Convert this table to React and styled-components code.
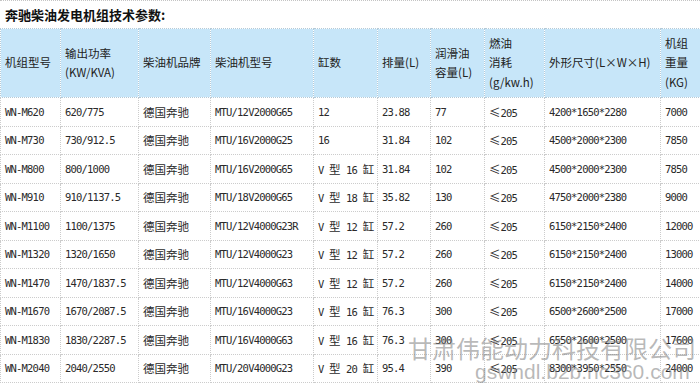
import React from 'react';
import styled, { createGlobalStyle } from 'styled-components';

const Global = createGlobalStyle`
  html, body { margin: 0; padding: 0; background: #fff; }
  body { font-family: "Noto Sans CJK SC", sans-serif; }
`;

const Page = styled.div`
  position: relative;
  width: 700px;
  height: 384px;
  overflow: hidden;
  background: #fff;
`;

const Title = styled.h2`
  margin: 0;
  height: 28px;
  box-sizing: border-box;
  border-top: 1px dotted #c4c4c4;
  padding-left: 5px;
  display: flex;
  align-items: center;
  font: bold 13px/1 "Noto Sans CJK SC", sans-serif;
  color: #111;
`;

const Table = styled.table`
  width: 700px;
  table-layout: fixed;
  border-collapse: collapse;
`;

const HeadRow = styled.tr`
  height: 69px;
`;

const BodyRow = styled.tr`
  height: 28.5px;
`;

const HeadCell = styled.th`
  background: #c7e6f9;
  border: 1px dotted #b4cad8;
  text-align: left;
  padding: 0 0 0 4px;
  font: normal 11.5px/19.5px "Noto Sans CJK SC", sans-serif;
  color: #222;
  vertical-align: middle;
  white-space: nowrap;
  overflow: hidden;
`;

const Cell = styled.td`
  border: 1px dotted #cccccc;
  padding: 0 0 0 4px;
  font-family: "DejaVu Sans Mono", "Noto Sans CJK SC", monospace;
  font-size: 10.5px;
  letter-spacing: -0.8px;
  color: #2a2a2a;
  vertical-align: middle;
  white-space: pre;
  overflow: hidden;
`;

const Han = styled.span`
  font-family: "Noto Sans CJK SC", sans-serif;
  font-size: 11.5px;
  letter-spacing: 0;
`;

const WatermarkCn = styled.div`
  position: absolute;
  left: 408px;
  top: 336px;
  font: 24px/24px "Noto Sans CJK SC", sans-serif;
  color: rgba(125, 125, 125, 0.55);
  white-space: nowrap;
  pointer-events: none;
`;

const WatermarkUrl = styled.div`
  position: absolute;
  left: 475px;
  top: 361px;
  font: 21px/21px "Liberation Sans", sans-serif;
  color: rgba(125, 125, 125, 0.55);
  white-space: nowrap;
  pointer-events: none;
`;

const widths = [60, 78, 72, 103, 64, 53, 54, 60, 116, 40];

const headers = [
  ['机组型号'],
  ['输出功率', '(KW/KVA)'],
  ['柴油机品牌'],
  ['柴油机型号'],
  ['缸数'],
  ['排量(L)'],
  ['润滑油', '容量(L)'],
  ['燃油', '消耗', '(g/kw.h)'],
  ['外形尺寸(L×W×H)'],
  ['机组', '重量', '(KG)'],
];

const rows = [
  ['WN-M620', '620/775', '德国奔驰', 'MTU/12V2000G65', '12', '23.88', '77', '≤205', '4200*1650*2280', '7000'],
  ['WN-M730', '730/912.5', '德国奔驰', 'MTU/16V2000G25', '16', '31.84', '102', '≤205', '4500*2000*2300', '7850'],
  ['WN-M800', '800/1000', '德国奔驰', 'MTU/16V2000G65', 'V 型 16 缸', '31.84', '102', '≤205', '4500*2000*2300', '7850'],
  ['WN-M910', '910/1137.5', '德国奔驰', 'MTU/18V2000G65', 'V 型 18 缸', '35.82', '130', '≤205', '4750*2000*2380', '9000'],
  ['WN-M1100', '1100/1375', '德国奔驰', 'MTU/12V4000G23R', 'V 型 12 缸', '57.2', '260', '≤205', '6150*2150*2400', '12000'],
  ['WN-M1320', '1320/1650', '德国奔驰', 'MTU/12V4000G23', 'V 型 12 缸', '57.2', '260', '≤205', '6150*2150*2400', '13000'],
  ['WN-M1470', '1470/1837.5', '德国奔驰', 'MTU/12V4000G63', 'V 型 12 缸', '57.2', '260', '≤205', '6150*2150*2400', '14000'],
  ['WN-M1670', '1670/2087.5', '德国奔驰', 'MTU/16V4000G23', 'V 型 16 缸', '76.3', '300', '≤205', '6500*2600*2500', '17000'],
  ['WN-M1830', '1830/2287.5', '德国奔驰', 'MTU/16V4000G63', 'V 型 16 缸', '76.3', '300', '≤205', '6550*2600*2500', '17600'],
  ['WN-M2040', '2040/2550', '德国奔驰', 'MTU/20V4000G23', 'V 型 20 缸', '95.4', '390', '≤205', '8300*3950*2550', '24000'],
];

const wide = /([\u4e00-\u9fff\u2264]+)/;

function renderMixed(text) {
  return text.split(wide).map((part, i) =>
    /[\u4e00-\u9fff\u2264]/.test(part) ? <Han key={i}>{part}</Han> : part
  );
}

export default function App() {
  return (
    <Page>
      <Global />
      <Title>奔驰柴油发电机组技术参数:</Title>
      <Table>
        <colgroup>
          {widths.map((w, i) => (
            <col key={i} style={{ width: w }} />
          ))}
        </colgroup>
        <thead>
          <HeadRow>
            {headers.map((lines, i) => (
              <HeadCell key={i}>
                {lines.map((l, j) => (
                  <div key={j}>{l}</div>
                ))}
              </HeadCell>
            ))}
          </HeadRow>
        </thead>
        <tbody>
          {rows.map((r, i) => (
            <BodyRow key={i}>
              {r.map((c, j) => (
                <Cell key={j}>{renderMixed(c)}</Cell>
              ))}
            </BodyRow>
          ))}
        </tbody>
      </Table>
      <WatermarkCn>甘肃伟能动力科技有限公司</WatermarkCn>
      <WatermarkUrl>gswndl.b2b.hc360.com</WatermarkUrl>
    </Page>
  );
}
